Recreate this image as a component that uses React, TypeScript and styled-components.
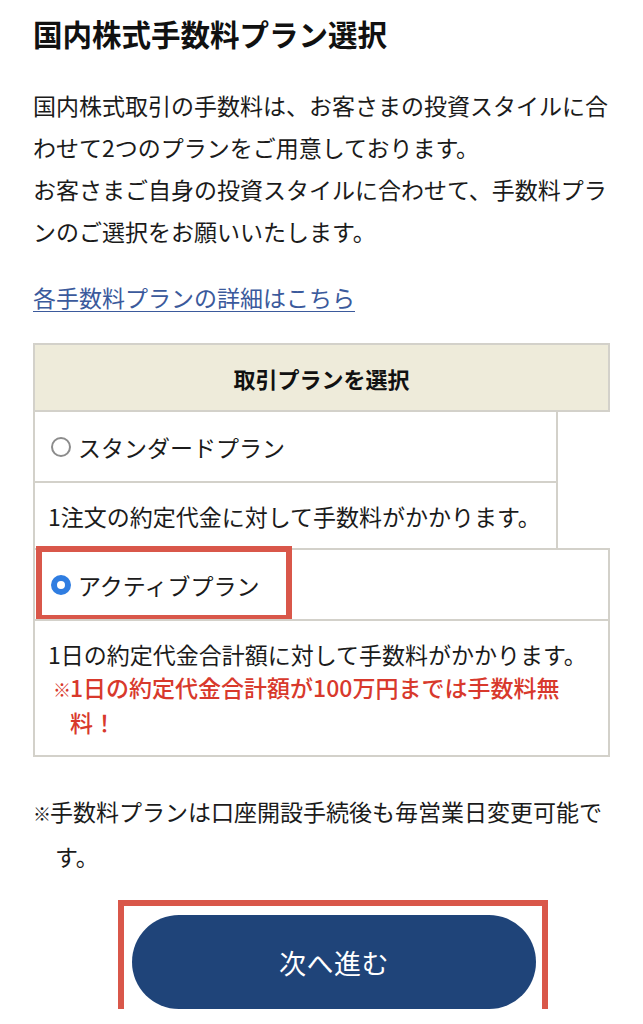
import * as React from 'react'
import styled, { createGlobalStyle } from 'styled-components'

const GlobalStyle = createGlobalStyle`
    html, body {
        margin: 0;
        padding: 0;
        background: #fff;
    }
    body {
        font-family: 'Noto Sans CJK JP', 'Noto Sans', sans-serif;
        color: #1b1b1b;
    }
`

const Page = styled.div`
    width: 643px;
    padding: 14px 33px 0;
    box-sizing: border-box;
`

const Title = styled.h1`
    margin: 0;
    font-size: 29.5px;
    line-height: 38px;
    font-weight: bold;
    color: #111;
`

const Lead = styled.p`
    margin: 32px 0 0;
    font-size: 23px;
    line-height: 42px;
    white-space: nowrap;
`

const DetailLink = styled.a`
    display: block;
    margin-top: 24px;
    font-size: 23px;
    line-height: 42px;
    color: #3b5a9c;
    text-decoration: underline;
    text-underline-offset: 4px;
    text-decoration-thickness: 1px;
`

const PlanTable = styled.div`
    margin-top: 25px;
    display: flex;
    flex-direction: column;
    align-items: flex-start;
`

const Row = styled.div<{ $wide: boolean, $h: number }>`
    position: relative;
    box-sizing: border-box;
    width: ${p => p.$wide ? '577px' : '525px'};
    min-height: ${p => p.$h}px;
    margin-top: -2px;
    border: 2px solid #d3d1ca;
    background: #fff;
    display: flex;
    align-items: center;
    padding: 0 13px;
    font-size: 23px;
    &:first-child {
        margin-top: 0;
    }
`

const HeaderRow = styled(Row)`
    background: #eeebda;
    justify-content: center;
    font-size: 22px;
    font-weight: bold;
    color: #111;
`

const RadioLabel = styled.label`
    display: flex;
    align-items: center;
    gap: 7px;
    padding-left: 3px;
    font-size: 23px;
    color: #1b1b1b;
`

const RadioMark = styled.span<{ checked: boolean }>`
    box-sizing: border-box;
    width: 20px;
    height: 20px;
    border-radius: 50%;
    background: #fff;
    border: ${p => p.checked ? '6px solid #2f7de1' : '2px solid #8c8c8c'};
`

const Desc = styled.div`
    padding: 16px 0 15px;
    font-size: 23px;
    line-height: 33px;
    white-space: nowrap;
`

const RedNote = styled.div`
    color: #d8392c;
    font-weight: 500;
    padding-left: 22px;
    text-indent: -17px;
`

const Kome = styled.span`
    font-size: 18px;
    margin-right: -1px;
`

const Callout = styled.div`
    position: absolute;
    left: 1px;
    top: -4px;
    width: 256px;
    height: 75px;
    box-sizing: border-box;
    border: 6px solid #d9574a;
    pointer-events: none;
`

const Footnote = styled.p`
    margin: 33px 0 0;
    font-size: 23px;
    line-height: 43px;
    padding-left: 22px;
    text-indent: -22px;
    white-space: nowrap;
`

const ButtonRow = styled.div`
    display: flex;
    justify-content: center;
    padding-left: 25px;
    margin-top: 37px;
`

const ButtonFrame = styled.div`
    position: relative;
`

const NextButton = styled.button`
    width: 404px;
    height: 94px;
    border: none;
    border-radius: 47px;
    background: #1f4479;
    color: #fff;
    font-family: 'Noto Sans CJK JP', sans-serif;
    font-size: 27px;
    letter-spacing: 0.5px;
    cursor: pointer;
`

const ButtonCallout = styled.div`
    position: absolute;
    inset: -15px -12px -10px -14px;
    border: 6px solid #d9574a;
    pointer-events: none;
`

const Radio = ({ checked, label }: { checked: boolean, label: string }) => (
    <RadioLabel>
        <RadioMark checked={checked} />
        {label}
    </RadioLabel>
)

export default function App() {
    return <>
        <GlobalStyle />
        <Page>
            <Title>国内株式手数料プラン選択</Title>
            <Lead>
                国内株式取引の手数料は、お客さまの投資スタイルに合<br />
                わせて2つのプランをご用意しております。<br />
                お客さまご自身の投資スタイルに合わせて、手数料プラ<br />
                ンのご選択をお願いいたします。
            </Lead>
            <DetailLink href='#'>各手数料プランの詳細はこちら</DetailLink>

            <PlanTable>
                <HeaderRow $wide $h={69}>取引プランを選択</HeaderRow>
                <Row $wide={false} $h={73}>
                    <Radio checked={false} label='スタンダードプラン' />
                </Row>
                <Row $wide={false} $h={69}>
                    1注文の約定代金に対して手数料がかかります。
                </Row>
                <Row $wide $h={73}>
                    <Radio checked label='アクティブプラン' />
                    <Callout />
                </Row>
                <Row $wide $h={138}>
                    <Desc>
                        1日の約定代金合計額に対して手数料がかかります。
                        <RedNote>
                            <Kome>※</Kome>1日の約定代金合計額が100万円までは手数料無<br />料！
                        </RedNote>
                    </Desc>
                </Row>
            </PlanTable>

            <Footnote>
                <Kome>※</Kome>手数料プランは口座開設手続後も毎営業日変更可能で<br />す。
            </Footnote>

            <ButtonRow>
                <ButtonFrame>
                    <NextButton>次へ進む</NextButton>
                    <ButtonCallout />
                </ButtonFrame>
            </ButtonRow>
        </Page>
    </>
}
